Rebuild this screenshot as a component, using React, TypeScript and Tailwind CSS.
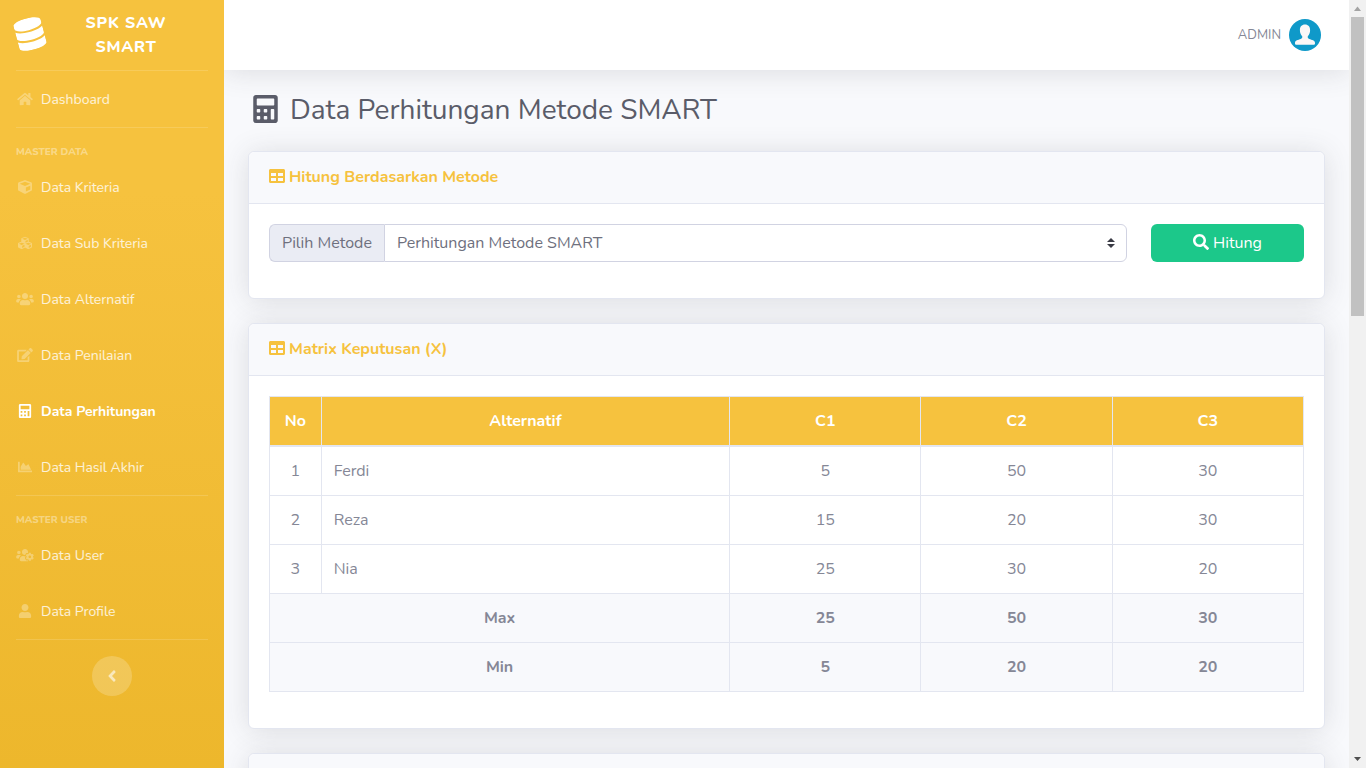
import { useState } from 'react';
import type { ReactNode } from 'react';
import type { IconType } from 'react-icons';
import {
  FaAngleLeft,
  FaCalculator,
  FaChartArea,
  FaCube,
  FaCubes,
  FaDatabase,
  FaEdit,
  FaHome,
  FaSearch,
  FaTable,
  FaUser,
  FaUsers,
  FaUsersCog
} from 'react-icons/fa';

type NavItem = { label: string; icon: IconType };

const masterData: NavItem[] = [
  { label: 'Data Kriteria', icon: FaCube },
  { label: 'Data Sub Kriteria', icon: FaCubes },
  { label: 'Data Alternatif', icon: FaUsers },
  { label: 'Data Penilaian', icon: FaEdit },
  { label: 'Data Perhitungan', icon: FaCalculator },
  { label: 'Data Hasil Akhir', icon: FaChartArea }
];

const masterUser: NavItem[] = [
  { label: 'Data User', icon: FaUsersCog },
  { label: 'Data Profile', icon: FaUser }
];

const criteria = ['C1', 'C2', 'C3'];

const alternatives = [
  { name: 'Ferdi', values: [5, 50, 30] },
  { name: 'Reza', values: [15, 20, 30] },
  { name: 'Nia', values: [25, 30, 20] }
];

const summary = [
  { label: 'Max', pick: Math.max },
  { label: 'Min', pick: Math.min }
];

function NavLink({ item, active = false }: { item: NavItem; active?: boolean }) {
  const Icon = item.icon;
  return (
    <a
      href="#"
      className={`flex h-14 items-center gap-[7px] px-4 text-sm ${
        active ? 'font-bold text-white' : 'text-white/80 hover:text-white'
      }`}
    >
      <Icon className={`h-[14px] w-[18px] shrink-0 ${active ? 'text-white' : 'text-white/30'}`} />
      <span className="pt-0.5">{item.label}</span>
    </a>
  );
}

function Divider() {
  return <hr className="mx-4 border-white/15" />;
}

function NavHeading({ children }: { children: string }) {
  return (
    <div className="mt-4 h-[15px] px-4 text-[10px] leading-[17px] font-extrabold text-white/40 uppercase">
      {children}
    </div>
  );
}

function Sidebar() {
  return (
    <nav className="flex w-56 shrink-0 flex-col bg-linear-to-b from-[#f6c23e] from-25% to-[#edb72c]">
      <a href="#" className="flex h-[70px] items-center px-4 text-white">
        <FaDatabase className="mb-0.5 h-8 w-7 shrink-0 -rotate-15" />
        <span className="mx-4 flex-1 text-center text-base leading-6 font-extrabold tracking-wider">
          SPK SAW SMART
        </span>
      </a>
      <Divider />
      <NavLink item={{ label: 'Dashboard', icon: FaHome }} />
      <Divider />
      <NavHeading>Master Data</NavHeading>
      {masterData.map((item) => (
        <NavLink key={item.label} item={item} active={item.label === 'Data Perhitungan'} />
      ))}
      <Divider />
      <NavHeading>Master User</NavHeading>
      {masterUser.map((item) => (
        <NavLink key={item.label} item={item} />
      ))}
      <Divider />
      <button
        type="button"
        aria-label="Toggle sidebar"
        className="mx-auto mt-4 flex size-10 items-center justify-center rounded-full bg-white/20 text-white/60"
      >
        <FaAngleLeft className="size-[18px]" />
      </button>
    </nav>
  );
}

function Avatar() {
  return (
    <svg viewBox="0 0 32 32" className="size-8" aria-hidden="true">
      <circle cx="16" cy="16" r="16" fill="#0f99c9" />
      <path
        d="M16 5.600c-3.300 0-5.100 2.300-5.100 5.400 0 2.600.8 4.900 2.300 6.300.3 1.500-.2 2.300-1.500 2.800-2.500.9-5.700 1.500-5.700 3.600v.7c0 .9.6 1.400 1.500 1.400h17c.9 0 1.500-.5 1.500-1.400v-.7c0-2.100-3.200-2.700-5.700-3.600-1.300-.5-1.800-1.300-1.500-2.800 1.500-1.400 2.300-3.700 2.300-6.300 0-3.100-1.800-5.400-5.100-5.400z"
        fill="#faf7f7"
      />
    </svg>
  );
}

function Topbar() {
  return (
    <header className="flex h-[70px] shrink-0 items-center justify-end bg-white px-7 shadow-[0_2px_28px_rgba(58,59,69,0.15)]">
      <a href="#" className="flex items-center gap-2 text-[13px] text-[#858796]">
        <span className="pt-0.5">ADMIN</span>
        <Avatar />
      </a>
    </header>
  );
}

function Card({ title, children }: { title?: string; children?: ReactNode }) {
  return (
    <section className="mb-6 rounded-md border border-[#e3e6f0] bg-white shadow-[0_2px_28px_rgba(58,59,69,0.15)]">
      <div className="min-h-[52px] rounded-t-md border-b border-[#e3e6f0] bg-[#f8f9fc] px-5 py-4">
        {title && (
          <h2 className="flex items-center gap-1 text-base leading-[19px] font-bold text-[#f6c23e]">
            <FaTable className="mb-[3px] shrink-0" />
            {title}
          </h2>
        )}
      </div>
      <div className="px-5 pt-5 pb-9">{children}</div>
    </section>
  );
}

function MethodForm() {
  const [method, setMethod] = useState('smart');
  return (
    <form className="flex gap-6" onSubmit={(e) => e.preventDefault()}>
      <div className="flex h-[38px] flex-1 text-[#6e707e]">
        <label
          htmlFor="method"
          className="flex items-center rounded-l-md border border-r-0 border-[#d1d3e2] bg-[#eaecf4] px-3"
        >
          Pilih Metode
        </label>
        <div className="relative flex-1">
          <select
            id="method"
            value={method}
            onChange={(e) => setMethod(e.target.value)}
            className="size-full appearance-none rounded-r-md border border-[#d1d3e2] bg-white px-3"
          >
            <option value="smart">Perhitungan Metode SMART</option>
            <option value="saw">Perhitungan Metode SAW</option>
          </select>
          <svg
            viewBox="0 0 4 5"
            className="pointer-events-none absolute inset-y-0 right-3 my-auto h-[10px] w-2"
            aria-hidden="true"
          >
            <path fill="#3a3b45" d="M2 0L0 2h4zm0 5L0 3h4z" />
          </svg>
        </div>
      </div>
      <button
        type="submit"
        className="flex w-[153px] items-center justify-center gap-1 rounded-md bg-[#1cc88a] text-white hover:bg-[#17a673]"
      >
        <FaSearch className="mb-0.5" />
        Hitung
      </button>
    </form>
  );
}

function DecisionMatrix() {
  return (
    <table className="w-full table-fixed border-collapse text-center leading-6">
      <colgroup>
        <col className="w-[5%]" />
        <col />
        <col className="w-[18.5%]" />
        <col className="w-[18.5%]" />
        <col className="w-[18.5%]" />
      </colgroup>
      <thead>
        <tr className="bg-[#f6c23e] text-white">
          {['No', 'Alternatif', ...criteria].map((head) => (
            <th key={head} className="border border-b-2 border-[#e3e6f0] p-3 font-bold">
              {head}
            </th>
          ))}
        </tr>
      </thead>
      <tbody>
        {alternatives.map((row, i) => (
          <tr key={row.name}>
            <td className="border border-[#e3e6f0] p-3">{i + 1}</td>
            <td className="border border-[#e3e6f0] p-3 text-left">{row.name}</td>
            {row.values.map((value, c) => (
              <td key={criteria[c]} className="border border-[#e3e6f0] p-3">
                {value}
              </td>
            ))}
          </tr>
        ))}
        {summary.map(({ label, pick }) => (
          <tr key={label} className="bg-[#f8f9fc]">
            <th colSpan={2} className="border border-[#e3e6f0] p-3 font-bold">
              {label}
            </th>
            {criteria.map((name, c) => (
              <th key={name} className="border border-[#e3e6f0] p-3 font-bold">
                {pick(...alternatives.map((row) => row.values[c]))}
              </th>
            ))}
          </tr>
        ))}
      </tbody>
    </table>
  );
}

function Scrollbar() {
  return (
    <div className="flex w-[17px] shrink-0 flex-col items-center bg-[#f1f1f1]" aria-hidden="true">
      <svg viewBox="0 0 17 17" className="size-[17px] shrink-0">
        <path d="M8.500 6.500L12 11H5z" fill="#a3a3a3" />
      </svg>
      <div className="min-h-0 w-full flex-1 px-[2px]">
        <div className="h-[40.8%] bg-[#c1c1c1]" />
      </div>
      <svg viewBox="0 0 17 17" className="size-[17px] shrink-0">
        <path d="M5 6h7l-3.500 4z" fill="#505050" />
      </svg>
    </div>
  );
}

export default function App() {
  return (
    <div className="flex h-screen overflow-hidden bg-[#f8f9fc] font-[Nunito,Lato,sans-serif] text-base text-[#858796]">
      <Sidebar />
      <div className="flex min-w-0 flex-1 flex-col overflow-hidden">
        <Topbar />
        <main className="px-6 pt-6">
          <h1 className="mb-6 flex items-center gap-3 pl-[5px] text-[28px] leading-[33px] text-[#5a5c69]">
            <FaCalculator className="mb-1 h-7 w-[25px] shrink-0" />
            Data Perhitungan Metode SMART
          </h1>
          <Card title="Hitung Berdasarkan Metode">
            <MethodForm />
          </Card>
          <Card title="Matrix Keputusan (X)">
            <DecisionMatrix />
          </Card>
          <Card />
        </main>
      </div>
      <Scrollbar />
    </div>
  );
}
